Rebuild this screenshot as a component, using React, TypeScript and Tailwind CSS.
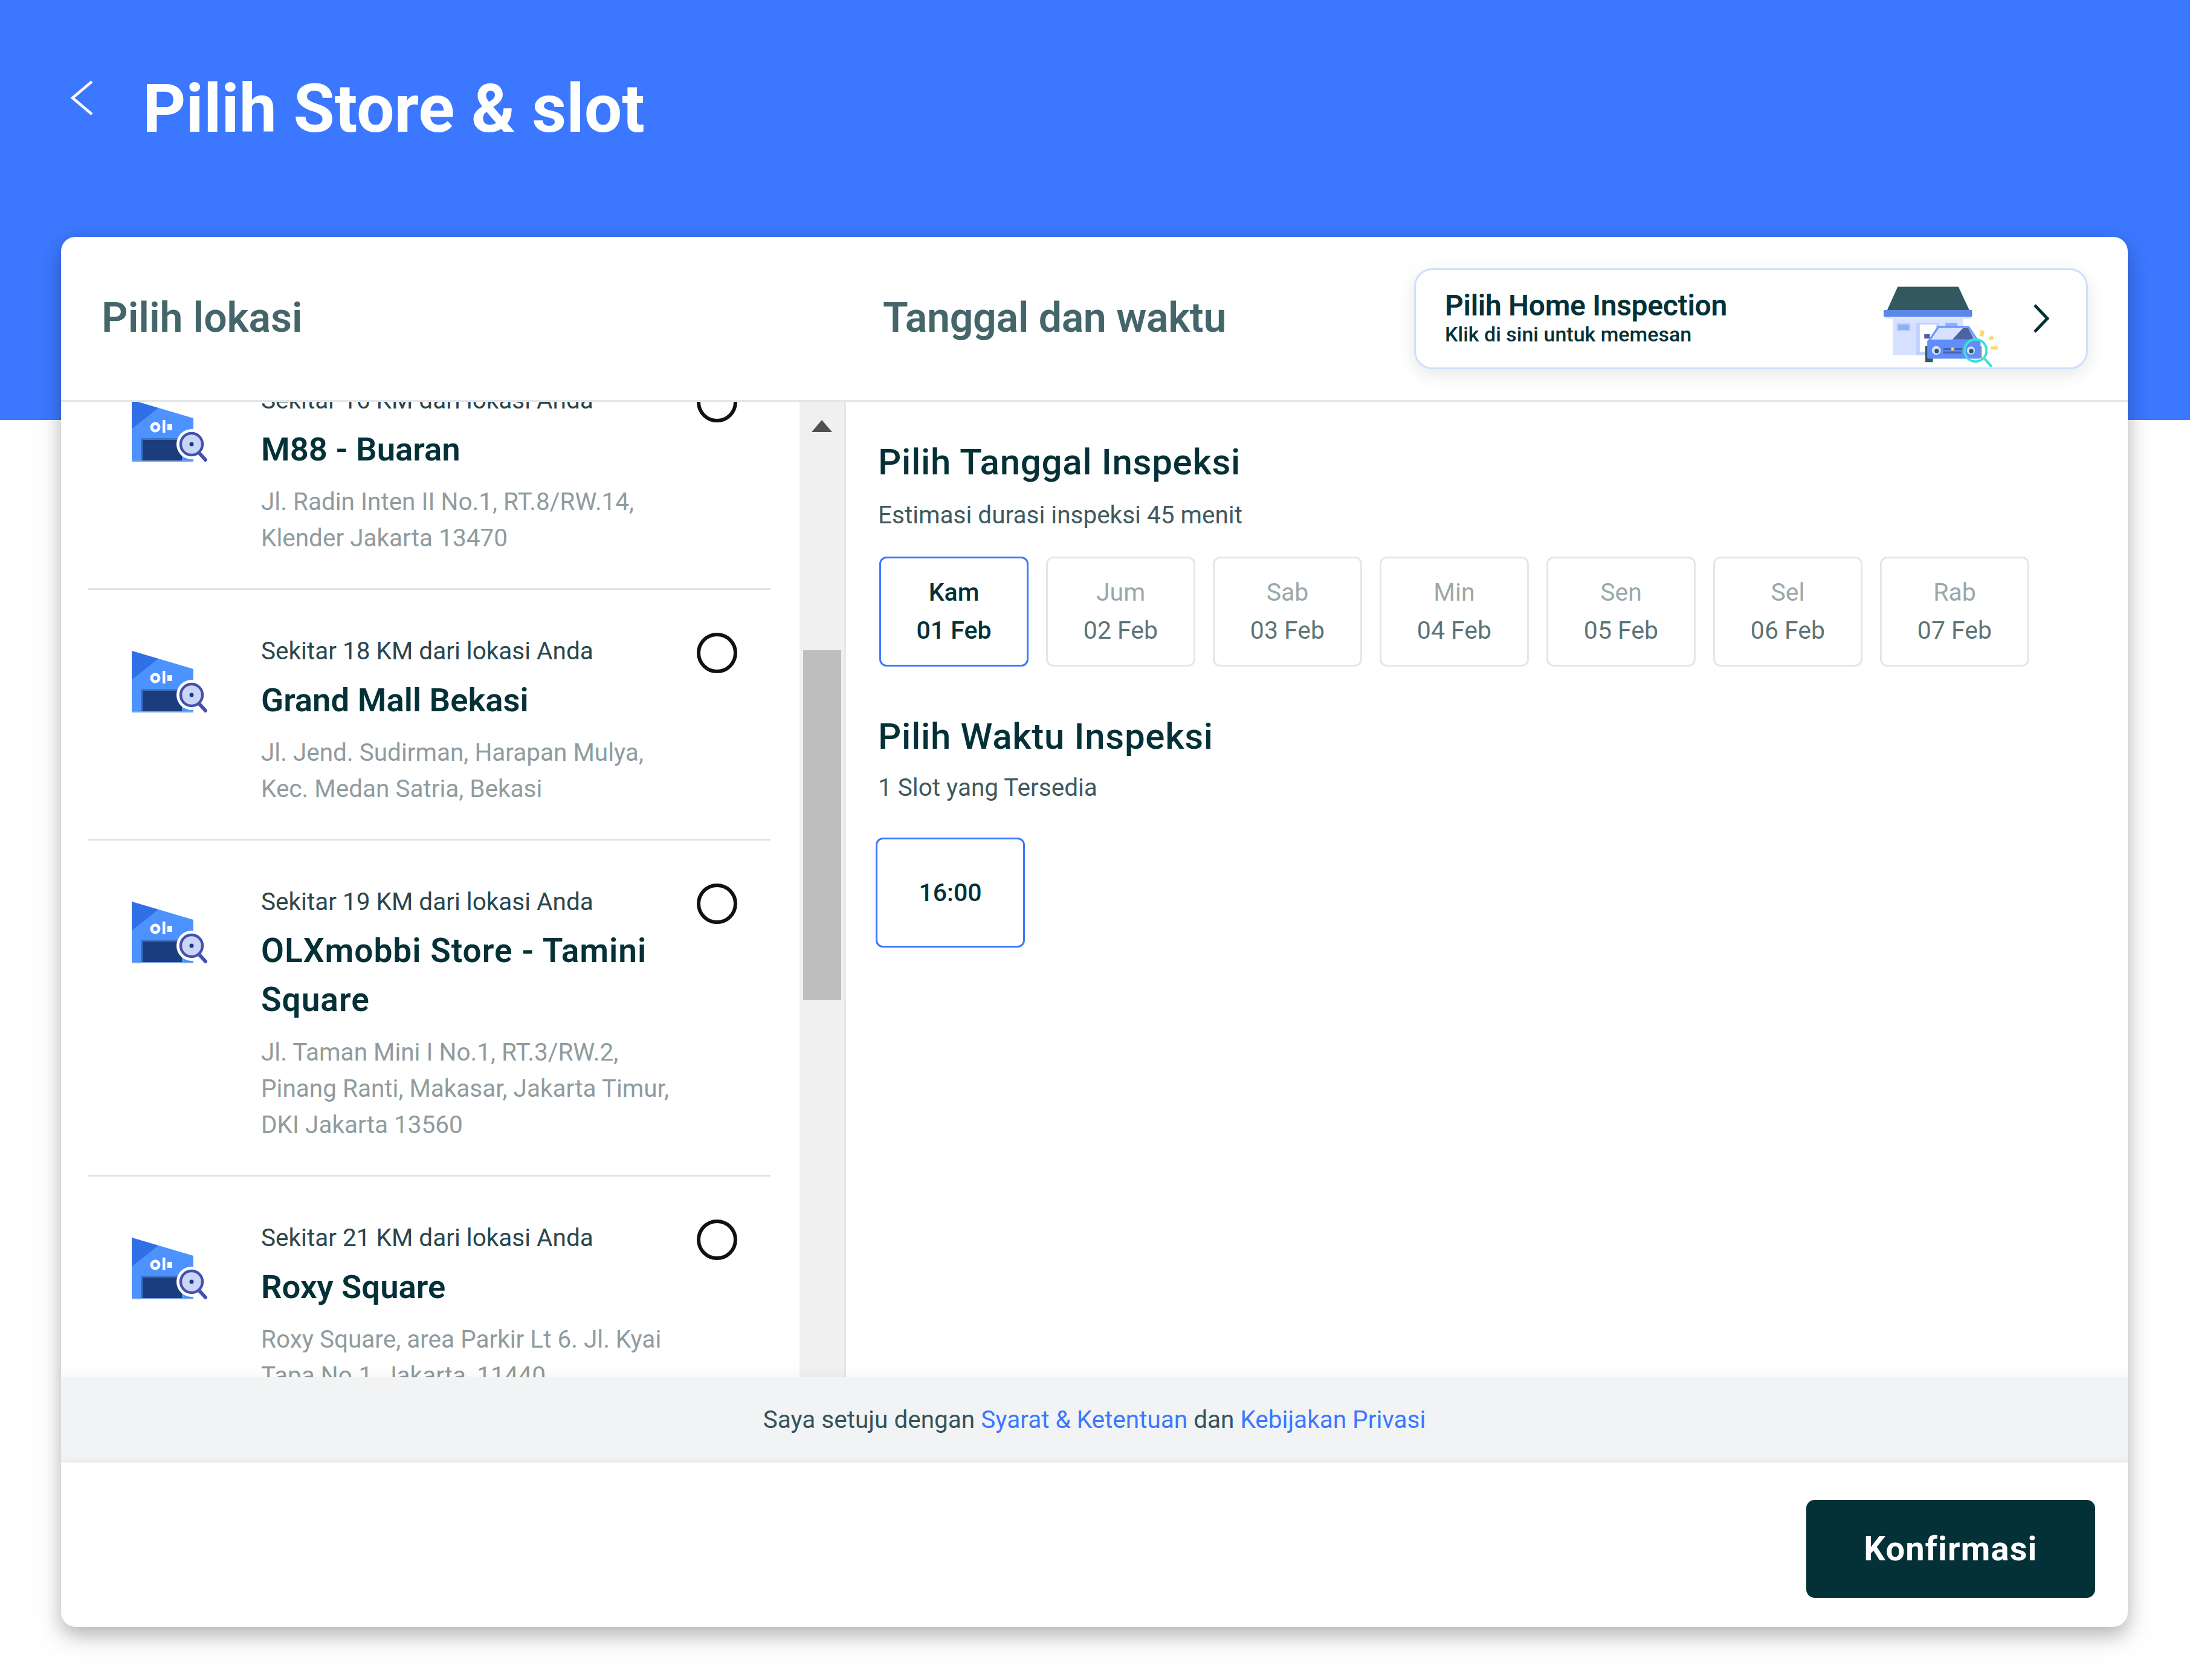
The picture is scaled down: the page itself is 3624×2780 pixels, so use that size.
const stores = [
  { dist: 'Sekitar 16 KM dari lokasi Anda', name: 'M88 - Buaran', addr: 'Jl. Radin Inten II No.1, RT.8/RW.14, Klender Jakarta 13470' },
  { dist: 'Sekitar 18 KM dari lokasi Anda', name: 'Grand Mall Bekasi', addr: 'Jl. Jend. Sudirman, Harapan Mulya, Kec. Medan Satria, Bekasi' },
  { dist: 'Sekitar 19 KM dari lokasi Anda', name: 'OLXmobbi Store - Tamini Square', addr: 'Jl. Taman Mini I No.1, RT.3/RW.2, Pinang Ranti, Makasar, Jakarta Timur, DKI Jakarta 13560', wide: true },
  { dist: 'Sekitar 21 KM dari lokasi Anda', name: 'Roxy Square', addr: 'Roxy Square, area Parkir Lt 6. Jl. Kyai Tapa No.1, Jakarta, 11440' },
];

const dates = [
  ['Kam', '01 Feb'], ['Jum', '02 Feb'], ['Sab', '03 Feb'], ['Min', '04 Feb'],
  ['Sen', '05 Feb'], ['Sel', '06 Feb'], ['Rab', '07 Feb'],
];

function StoreIcon() {
  return (
    <svg width="125" height="102" viewBox="0 0 125 102" className="shrink-0 mt-[30px]">
      <polygon points="0,0 102,30 102,102 0,102" fill="#4c93ff" />
      <polygon points="0,0 44,13 0,48" fill="#2f70e6" />
      <circle cx="39" cy="45" r="6" fill="none" stroke="#fff" strokeWidth="5" />
      <rect x="51" y="33" width="4.5" height="21" fill="#fff" />
      <rect x="59" y="40" width="8" height="10" fill="#fff" />
      <rect x="15" y="63" width="68" height="39" fill="#3d72c4" />
      <rect x="18" y="66" width="65" height="34" fill="#1b3c7d" />
      <rect x="0" y="100" width="102" height="2" fill="#7da5e8" />
      <circle cx="99" cy="73" r="25" fill="#fff" />
      <line x1="112" y1="88" x2="124" y2="101" stroke="#4450b0" strokeWidth="6" />
      <circle cx="99" cy="73" r="18" fill="#c9d6f8" stroke="#4450b0" strokeWidth="4.5" />
      <circle cx="99" cy="73" r="3.5" fill="#1b3c7d" />
    </svg>
  );
}

function HomeIllustration() {
  return (
    <svg width="193" height="137" viewBox="198 60 580 411" className="self-end shrink-0">
      <polygon points="268,70 570,70 625,188 215,188" fill="#33595e" />
      <rect x="198" y="186" width="440" height="34" rx="4" fill="#5b88e8" />
      <rect x="207" y="220" width="423" height="10" fill="#dbe6ff" />
      <rect x="243" y="230" width="350" height="180" fill="#d6e2ff" />
      <rect x="262" y="250" width="70" height="42" fill="#bfd2ff" />
      <rect x="270" y="258" width="55" height="27" fill="#8fb0f5" />
      <rect x="360" y="250" width="115" height="160" fill="#bfd2ff" />
      <rect x="378" y="258" width="82" height="137" fill="#fff" />
      <rect x="505" y="250" width="60" height="35" fill="#8fb0f5" />
      <rect x="405" y="365" width="38" height="80" fill="#33595e" />
      <rect x="668" y="365" width="18" height="60" fill="#8a9a9c" />
      <rect x="400" y="306" width="28" height="22" fill="#4b63a3" />
      <polygon points="470,270 620,270 665,337 425,337" fill="#d6e2ff" stroke="#6f9aff" strokeWidth="10" />
      <polygon points="540,332 592,276 618,276 650,332" fill="#4b63a3" />
      <rect x="415" y="335" width="265" height="93" rx="8" fill="#5f8dfa" />
      <circle cx="460" cy="387" r="22" fill="#d6e2ff" />
      <circle cx="462" cy="390" r="11" fill="#33595e" />
      <circle cx="632" cy="387" r="20" fill="#d6e2ff" />
      <circle cx="634" cy="390" r="11" fill="#33595e" />
      <rect x="495" y="375" width="95" height="10" fill="#4b63a3" />
      <rect x="495" y="392" width="90" height="10" fill="#4b63a3" />
      <circle cx="541" cy="380" r="8" fill="#ffd25e" />
      <circle cx="655" cy="387" r="55" fill="none" stroke="#3de0d8" strokeWidth="12" />
      <line x1="700" y1="428" x2="735" y2="468" stroke="#3de0d8" strokeWidth="12" />
      <rect x="677" y="287" width="20" height="30" transform="rotate(12 687 302)" fill="#ffd86b" />
      <rect x="722" y="316" width="22" height="18" transform="rotate(-30 733 325)" fill="#ffd86b" />
      <rect x="730" y="367" width="35" height="16" fill="#ffd86b" />
    </svg>
  );
}

function StoreRow({ dist, name, addr, wide, last }: { dist: string; name: string; addr: string; wide?: boolean; last: boolean }) {
  return (
    <div className={`ml-[44px] mr-[48px] flex pl-[73px] pt-[71px] pb-[53px] ${last ? '' : 'border-b-[3px] border-[#dfe3e4]'}`}>
      <StoreIcon />
      <div className="ml-[89px] w-[695px] shrink-0">
        <div className="text-[40.5px] leading-[60px] text-[#2b474b] whitespace-nowrap">{dist}</div>
        <div className={`mt-[11px] leading-[81px] font-semibold text-[#033137] ${wide ? 'text-[55px] tracking-[1px]' : 'text-[54.5px]'}`}>{name}</div>
        <div className="mt-[16px] text-[40.5px] leading-[60px] text-[#8f9c9e]">{addr}</div>
      </div>
      <div className="ml-[26px] h-[67px] w-[67px] shrink-0 rounded-full border-[6px] border-[#111]" />
    </div>
  );
}

export default function App() {
  return (
    <div className="min-h-[2780px] bg-[#fefefe] font-['Roboto',sans-serif]">
      <header className="flex h-[695px] items-start bg-[#3b78ff] pl-[116px] pt-[110px]">
        <svg width="40" height="60" viewBox="0 0 40 60" className="mt-[22px] shrink-0">
          <polyline points="36,3 4,30 36,57" fill="none" stroke="#fff" strokeWidth="4.5" />
        </svg>
        <h1 className="ml-[80px] text-[111px] leading-[140px] font-bold text-white whitespace-nowrap">Pilih Store &amp; slot</h1>
      </header>

      <main className="relative -mt-[303px] mx-[101px] w-[3420px] overflow-hidden rounded-[24px] bg-white shadow-[0_14px_34px_rgba(0,0,0,0.3)]">
        <div className="flex h-[273px] items-center border-b-[3px] border-[#e4e6e8]">
          <div className="w-[1360px] pl-[67px] pb-[2px] text-[68px] font-semibold text-[#44666b]">Pilih lokasi</div>
          <div className="flex-1 pb-[2px] text-[68px] font-semibold tracking-[-0.3px] text-[#44666b] whitespace-nowrap">Tanggal dan waktu</div>
          <div className="mr-[66px] flex h-[167px] w-[1115px] items-center rounded-[30px] border-[3px] border-[#cfdfff] bg-white pl-[48px] shadow-[0_8px_30px_rgba(0,0,0,0.1)]">
            <div className="w-[726px] shrink-0 pb-[4px] text-[#033137]">
              <div className="text-[48px] leading-[56px] font-semibold tracking-[-0.3px] whitespace-nowrap">Pilih Home Inspection</div>
              <div className="text-[34px] leading-[38px] font-medium whitespace-nowrap">Klik di sini untuk memesan</div>
            </div>
            <HomeIllustration />
            <svg width="28" height="50" viewBox="0 0 28 50" className="ml-[54px] shrink-0">
              <polyline points="3,3 24,25 3,47" fill="none" stroke="#033137" strokeWidth="5" />
            </svg>
          </div>
        </div>

        <div className="flex h-[1614px]">
          <div className="w-[1222px] shrink-0 overflow-hidden">
            <div className="-mt-[104px]">
              {stores.map((s, i) => (
                <StoreRow key={s.name} {...s} last={i === stores.length - 1} />
              ))}
            </div>
          </div>

          <div className="flex w-[77px] shrink-0 flex-col items-center border-r-[3px] border-[#e4e8ea] bg-[#f0f0f0] pt-[30px]">
            <svg width="34" height="20" viewBox="0 0 34 20" className="shrink-0">
              <polygon points="17,0 34,20 0,20" fill="#505050" />
            </svg>
            <div className="mt-[361px] h-[579px] w-[63px] bg-[#bebebe]" />
          </div>

          <div className="flex-1 pl-[53px] pt-[62px] text-[#033137]">
            <h2 className="text-[60px] leading-[76px] font-medium tracking-[0.7px]">Pilih Tanggal Inspeksi</h2>
            <p className="mt-[21px] text-[40.5px] leading-[56px] text-[#3f5a5e]">Estimasi durasi inspeksi 45 menit</p>
            <div className="mt-[41px] ml-[2px] flex gap-[29px]">
              {dates.map(([day, date], i) => (
                <div
                  key={date}
                  className={`flex h-[182px] w-[247px] flex-col items-center justify-center rounded-[12px] border-[3px] text-[41px] leading-[63px] ${i === 0 ? 'border-[#3b78ff] font-medium text-[#033137]' : 'border-[#e3e7e8] text-[#5d7477]'}`}
                >
                  <span className={i === 0 ? '' : 'text-[#9aa8aa]'}>{day}</span>
                  <span>{date}</span>
                </div>
              ))}
            </div>
            <h2 className="mt-[78px] text-[60px] leading-[76px] font-medium tracking-[0.7px]">Pilih Waktu Inspeksi</h2>
            <p className="mt-[18px] text-[40.5px] leading-[56px] text-[#3f5a5e]">1 Slot yang Tersedia</p>
            <div className="mt-[55px] -ml-[4px] flex h-[182px] w-[247px] items-center justify-center rounded-[12px] border-[3px] border-[#3b78ff] pt-[2px] text-[41px] font-medium">
              16:00
            </div>
          </div>
        </div>

        <div className="relative z-10 flex h-[141px] items-center justify-center bg-[#f2f3f5] text-[40.5px] text-[#33545a] shadow-[0_-6px_18px_rgba(0,0,0,0.04),inset_0_-14px_14px_-14px_rgba(0,0,0,0.09)]">
          <span>
            Saya setuju dengan <span className="text-[#3b78ff]">Syarat &amp; Ketentuan</span> dan <span className="text-[#3b78ff]">Kebijakan Privasi</span>
          </span>
        </div>

        <div className="flex h-[272px] justify-end pr-[54px] pt-[62px]">
          <button className="h-[162px] w-[478px] rounded-[14px] bg-[#033137] text-[56px] font-bold tracking-[1.2px] text-white">Konfirmasi</button>
        </div>
      </main>
    </div>
  );
}
